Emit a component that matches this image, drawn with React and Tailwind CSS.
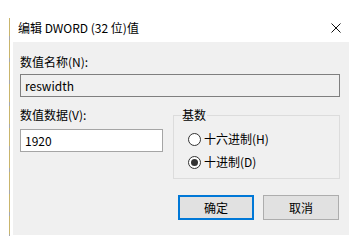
import React from "react";

const font = { fontFamily: '"Noto Sans CJK SC", sans-serif' };

function Radio({ checked, label }) {
  return (
    <div className="flex items-center h-[16px]">
      <div className="w-[13px] h-[13px] rounded-full border border-[#333] bg-white flex items-center justify-center">
        {checked && <div className="w-[7px] h-[7px] rounded-full bg-[#333]" />}
      </div>
      <span className="ml-[3px] text-[12px] leading-[16px] text-black">{label}</span>
    </div>
  );
}

export default function App() {
  return (
    <div className="w-[358px] h-[242px] bg-white pt-[18px] pl-[9px] overflow-hidden" style={font}>
      <div className="flex h-[218px]">
        <div className="w-[1px] h-full bg-[repeating-linear-gradient(to_bottom,#c9b56c_0px,#c9b56c_18px,#a8a8a8_18px,#a8a8a8_22px)]" />
        <div className="w-[339px] flex flex-col">
          <div className="h-[24px] flex items-start justify-between pt-[2px] pl-[8px] pr-[8px]">
            <span className="text-[12px] leading-[16px] text-black">编辑 DWORD (32 位)值</span>
            <svg width="10" height="10" viewBox="0 0 10 10" className="mt-[3px]">
              <path d="M0.5 0.5 L9.5 9.5 M9.5 0.5 L0.5 9.5" stroke="#111" strokeWidth="1" fill="none" />
            </svg>
          </div>
          <div className="ml-[3px] w-[336px] h-[193px] bg-[#f0f0f0] pl-[7px] pr-[9px] pt-[12px]">
            <div className="text-[12px] leading-[16px] text-black">数值名称(N):</div>
            <div className="mt-[4px] h-[23px] border border-[#7f7f7f] bg-[#f0f0f0] flex items-center pl-[4px] text-[12px] text-black">
              reswidth
            </div>
            <div className="mt-[10px] flex">
              <div className="w-[143px] flex flex-col">
                <div className="text-[12px] leading-[16px] text-black">数值数据(V):</div>
                <div className="mt-[6px] h-[23px] border border-[#a5a5a5] bg-white flex items-center pl-[4px] text-[12px] text-black">
                  1920
                </div>
              </div>
              <fieldset className="ml-[10px] flex-1 border border-[#dcdcdc] h-[72px] pl-[14px]">
                <legend className="ml-[-7px] px-[1px] text-[12px] leading-[16px] text-black">基数</legend>
                <div className="mt-[8px] flex flex-col gap-[7px]">
                  <Radio checked={false} label="十六进制(H)" />
                  <Radio checked={true} label="十进制(D)" />
                </div>
              </fieldset>
            </div>
            <div className="mt-[16px] flex justify-end gap-[9px] pr-[1px]">
              <button className="w-[76px] h-[25px] border-2 border-[#0078d7] bg-[#e1e1e1] text-[12px] text-black">确定</button>
              <button className="w-[76px] h-[25px] border border-[#adadad] bg-[#e1e1e1] text-[12px] text-black">取消</button>
            </div>
          </div>
        </div>
      </div>
    </div>
  );
}
